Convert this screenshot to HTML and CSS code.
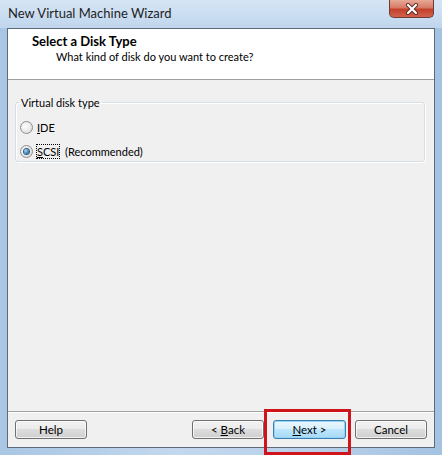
FILE: index.html
```html
<!DOCTYPE html>
<html lang="en">
<head>
    <meta charset="UTF-8">
    <title>New Virtual Machine Wizard</title>
    <link rel="stylesheet" href="styles.css">
</head>
<body>
    <div class="window">
        <div class="titlebar">
            <span class="title">New Virtual Machine Wizard</span>
            <div class="close-btn">
                <svg width="16" height="12" viewBox="0 0 16 12">
                    <path d="M4 2 L12 10 M12 2 L4 10" stroke="#5a2a24" stroke-width="4" stroke-linecap="round"/>
                    <path d="M4 2 L12 10 M12 2 L4 10" stroke="#ffffff" stroke-width="2.2" stroke-linecap="round"/>
                </svg>
            </div>
        </div>
        <div class="client">
            <div class="header">
                <div class="header-title">Select a Disk Type</div>
                <div class="header-sub">What kind of disk do you want to create?</div>
            </div>
            <div class="content">
                <fieldset class="groupbox">
                    <legend>Virtual disk type</legend>
                    <label class="radio">
                        <span class="radio-dot"></span>
                        <span><u>I</u>DE</span>
                    </label>
                    <label class="radio">
                        <span class="radio-dot checked"></span>
                        <span><span class="focus"><u>S</u>CSI</span>&nbsp; (Recommended)</span>
                    </label>
                </fieldset>
            </div>
            <div class="footer">
                <button class="btn btn-help">Help</button>
                <div class="nav-buttons">
                    <button class="btn">&lt; <u>B</u>ack</button>
                    <button class="btn btn-default"><u>N</u>ext &gt;</button>
                    <button class="btn">Cancel</button>
                </div>
            </div>
        </div>
        <div class="highlight"></div>
    </div>
</body>
</html>
```

FILE: styles.css
```css
body {
    margin: 0;
    padding: 0;
    width: 442px;
    height: 455px;
    overflow: hidden;
    font-family: Lato, "Noto Sans", Arial, sans-serif;
    font-size: 11px;
    color: #000;
}

.window {
    position: relative;
    width: 442px;
    height: 455px;
    box-sizing: border-box;
    padding: 0 7px 7px 7px;
    display: flex;
    flex-direction: column;
    background: linear-gradient(to right, #a9c6e4 0%, #c2d8ee 40%, #b8d0ea 70%, #a4c2e2 100%);
}

.titlebar {
    height: 28px;
    display: flex;
    justify-content: space-between;
    align-items: flex-start;
    background: linear-gradient(to bottom, #d6e5f5, #c0d6ed);
    margin: 0 -7px;
    padding: 0 8px 0 8px;
}

.title {
    margin-top: 5px;
    font-size: 13px;
    color: #1e1e1e;
}

.close-btn {
    width: 45px;
    height: 18px;
    box-sizing: border-box;
    border: 1px solid #6e3a32;
    border-top: none;
    border-radius: 0 0 5px 5px;
    background: linear-gradient(to bottom, #e8a996 0%, #d67a66 45%, #c4402c 55%, #d1614b 100%);
    display: flex;
    justify-content: center;
    align-items: center;
}

.client {
    flex: 1;
    display: flex;
    flex-direction: column;
    background: #f0f0f0;
    border: 1px solid #5d6b79;
}

.header {
    height: 51px;
    box-sizing: border-box;
    background: #ffffff;
    border-bottom: 1px solid #a0a0a0;
    padding: 4px 0 0 24px;
}

.header-title {
    font-weight: bold;
    font-size: 13px;
}

.header-sub {
    margin-top: 1px;
    padding-left: 24px;
    font-size: 11px;
}

.content {
    flex: 1;
    padding: 16px 9px 0 7px;
}

.groupbox {
    margin: 0;
    padding: 6px 0 8px 4px;
    height: 66px;
    box-sizing: border-box;
    border: 1px solid #d5dfe5;
    border-radius: 3px;
    box-shadow: inset 1px 1px 0 #ffffff, 1px 1px 0 #ffffff;
}

.groupbox legend {
    padding: 0 2px;
    margin-left: -1px;
    font-size: 11px;
}

.radio {
    display: flex;
    align-items: center;
    gap: 4px;
    height: 24px;
    font-size: 11px;
}

.radio-dot {
    width: 13px;
    height: 13px;
    box-sizing: border-box;
    border-radius: 50%;
    border: 1px solid #8e8f8f;
    background: radial-gradient(circle at 40% 40%, #ffffff 0%, #e6e6e6 60%, #cbcbcb 100%);
    display: flex;
    justify-content: center;
    align-items: center;
}

.radio-dot.checked::after {
    content: "";
    width: 5px;
    height: 5px;
    border-radius: 50%;
    background: radial-gradient(circle at 35% 35%, #a9dcf6, #2b6b9a 70%, #1b4f78);
    box-shadow: 0 0 0 1px #2d628d;
}

.focus {
    outline: 1px dotted #000;
    outline-offset: 0;
}

.footer {
    height: 36px;
    box-sizing: border-box;
    border-top: 1px solid #a0a0a0;
    box-shadow: inset 0 1px 0 #ffffff;
    padding: 8px 7px 0 7px;
    display: flex;
    justify-content: space-between;
    align-items: flex-start;
}

.nav-buttons {
    display: flex;
    gap: 9px;
}

.btn {
    width: 72px;
    height: 19px;
    padding: 0;
    font-family: inherit;
    font-size: 11.5px;
    color: #000;
    border: 1px solid #707070;
    border-radius: 3px;
    background: linear-gradient(to bottom, #f2f2f2 0%, #ebebeb 50%, #dddddd 50%, #cfcfcf 100%);
    box-shadow: inset 0 0 0 1px rgba(255, 255, 255, 0.7);
}

.btn-default {
    width: 73px;
    border-color: #3c7fb1;
    background: linear-gradient(to bottom, #eaf6fd 0%, #d9f0fc 50%, #bee6fd 50%, #a7d9f5 100%);
    box-shadow: inset 0 0 0 1px #94d4f4;
}

.highlight {
    position: absolute;
    left: 264px;
    top: 409px;
    width: 87px;
    height: 46px;
    box-sizing: border-box;
    border: 3px solid #d0141c;
}
```
